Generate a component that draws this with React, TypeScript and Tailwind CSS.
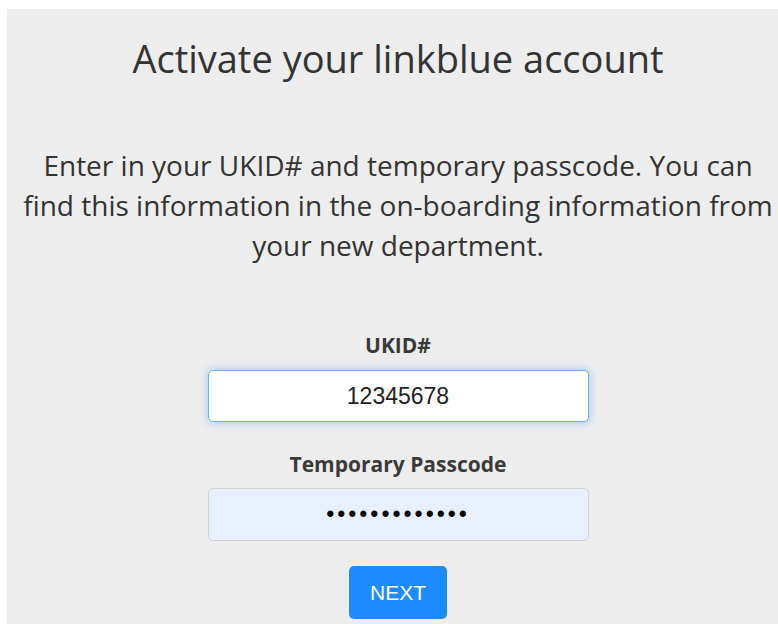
import React, { useState } from 'react';

const ActivatePage: React.FC = () => {
  const [ukid, setUkid] = useState('12345678');
  const [passcode, setPasscode] = useState('abcdefghijklm');

  return (
    <div className="min-h-screen overflow-hidden bg-white pl-[7px] pt-[9px]">
      <div className="min-h-[615px] w-[782px] bg-[#ededed] px-3 text-center text-[#333] [font-family:'Open_Sans',Lato,sans-serif]">
        <h1 className="pt-[28px] text-[38px] leading-[42px] font-normal">
          Activate your linkblue account
        </h1>

        <p className="mt-[66px] text-[28px] leading-[40px]">
          Enter in your UKID# and temporary passcode. You can find this information in the
          on-boarding information from your new department.
        </p>

        <form className="mt-[68px] flex flex-col items-center" onSubmit={(e) => e.preventDefault()}>
          <label htmlFor="ukid" className="text-[21px] leading-6 font-bold text-[#3a3a3a]">
            UKID#
          </label>
          <input
            id="ukid"
            type="text"
            value={ukid}
            onChange={(e) => setUkid(e.target.value)}
            className="mt-[13px] h-[52px] w-[381px] rounded-[5px] border border-[#6fb0f0] bg-white text-center text-[23px] text-[#222] shadow-[0_0_6px_2px_rgba(120,180,240,0.45)] outline-none [font-family:'Liberation_Sans',Arial,sans-serif]"
          />

          <label htmlFor="passcode" className="mt-[30px] text-[21px] leading-6 font-bold text-[#3a3a3a]">
            Temporary Passcode
          </label>
          <input
            id="passcode"
            type="password"
            value={passcode}
            onChange={(e) => setPasscode(e.target.value)}
            className="mt-[12px] h-[53px] w-[381px] rounded-[5px] border border-[#d2d2d2] bg-[#e8f0fe] text-center text-[23px] tracking-[3px] text-black outline-none [font-family:'Liberation_Sans',Arial,sans-serif]"
          />

          <button
            type="submit"
            className="mt-[25px] h-[53px] w-[98px] rounded-[5px] bg-[#1e8cff] text-[21px] text-white [font-family:'Liberation_Sans',Arial,sans-serif]"
          >
            NEXT
          </button>
        </form>
      </div>
    </div>
  );
};

export default function App() {
  return <ActivatePage />;
}
